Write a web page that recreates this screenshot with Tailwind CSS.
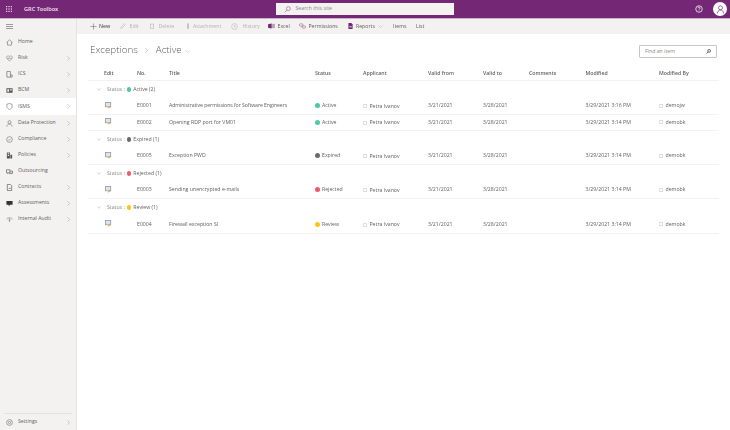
<!DOCTYPE html>
<html><head><meta charset="utf-8"><title>Exceptions</title>
<script src="https://cdn.jsdelivr.net/npm/@tailwindcss/browser@4"></script></head>
<body class="bg-white">
<div class="w-[730px] h-[430px] overflow-hidden flex flex-col font-['Open_Sans',sans-serif] text-[5.2px] text-[#605e5c] blur-[0.3px]">
  <header class="h-[19px] bg-[#742774] border-b border-[#c9b3c9] flex items-center text-white shrink-0">
    <div class="w-[18px] flex justify-center"><svg width="6" height="6" viewBox="0 0 6 6" fill="#e9d5e9"><rect width="1.2" height="1.2"/><rect x="2.4" width="1.2" height="1.2"/><rect x="4.8" width="1.2" height="1.2"/><rect y="2.4" width="1.2" height="1.2"/><rect x="2.4" y="2.4" width="1.2" height="1.2"/><rect x="4.8" y="2.4" width="1.2" height="1.2"/><rect y="4.8" width="1.2" height="1.2"/><rect x="2.4" y="4.8" width="1.2" height="1.2"/><rect x="4.8" y="4.8" width="1.2" height="1.2"/></svg></div>
    <span class="ml-[6px] w-[252px] font-semibold text-[5.600px] text-[#f1e7f1]">GRC Toolbox</span>
    <div class="w-[178px] h-[12px] bg-[#f3f2f1] flex items-center pl-[8px] gap-[4.500px] text-[#8a8886]"><svg width="7" height="7" viewBox="0 0 16 16" fill="none" stroke="#9a5f9a" stroke-width="1.5"><circle cx="10" cy="6" r="4.5"/><path d="M6.5 9.5 1.5 14.5"/></svg><span>Search this site</span></div>
    <div class="ml-auto flex items-center">
      <svg width="8" height="8" viewBox="0 0 16 16" fill="none" stroke="#fff" stroke-width="1.5"><circle cx="8" cy="8" r="6.5"/><path d="M6 6.2a2 2 0 1 1 3 1.7c-.7.4-1 .8-1 1.6M8 11v1.2"/></svg>
      <div class="ml-[10px] mr-[3px] w-[14px] h-[14px] rounded-full bg-white flex items-center justify-center"><svg width="9" height="9" viewBox="0 0 16 16" fill="none" stroke="#742774" stroke-width="1.2"><circle cx="8" cy="5" r="3.5"/><path d="M2.5 15c.3-4 2.5-6 5.5-6s5.200 2 5.500 6"/></svg></div>
    </div>
  </header>
  <div class="flex flex-1 min-h-0">
    <aside class="w-[77px] shrink-0 bg-[#f3f2f1] flex flex-col border-r border-[#e5e4e2]">
      <div class="h-[15px] flex items-center pl-[6px]"><svg width="7" height="5" viewBox="0 0 7 5" stroke="#777" stroke-width=".7"><path d="M0 .5h7M0 2.500h7M0 4.500h7"/></svg></div>
      <div class="flex flex-col">
        <div class="h-[16px] flex items-center pl-[6px] pr-[6px]"><svg class="w-[7px] h-[7px] mr-[5px]" viewBox="0 0 16 16" fill="none" stroke="#666" stroke-width="1.300"><path d="M1 8l7-6 7 6M3.500 7v7h9V7"/></svg><span>Home</span></div>
        <div class="h-[16px] flex items-center pl-[6px] pr-[6px]"><svg class="w-[7px] h-[7px] mr-[5px]" viewBox="0 0 16 16" fill="none" stroke="#777" stroke-width="1.300"><path d="M8 14 2 7.500C0 4 4-.5 8 4c4-4.500 8 0 6 3.500z"/><path d="M3 8h3l1.500-2 2 3 1-1h2"/></svg><span>Risk</span><svg class="ml-auto w-[3px] h-[5px]" viewBox="0 0 3 5" fill="none" stroke="#a19f9d" stroke-width=".5"><path d="M.4.3 2.600 2.500.4 4.700"/></svg></div>
        <div class="h-[16px] flex items-center pl-[6px] pr-[6px]"><svg class="w-[7px] h-[7px] mr-[5px]" viewBox="0 0 16 16" fill="none" stroke="#666" stroke-width="1.500"><path d="M2 1h8v13H2zM10 9h4v5h-4"/></svg><span>ICS</span><svg class="ml-auto w-[3px] h-[5px]" viewBox="0 0 3 5" fill="none" stroke="#a19f9d" stroke-width=".5"><path d="M.4.3 2.600 2.500.4 4.700"/></svg></div>
        <div class="h-[16px] flex items-center pl-[6px] pr-[6px]"><svg class="w-[7px] h-[7px] mr-[5px]" viewBox="0 0 16 16" fill="#555"><path d="M1 3h14v10H1zM3 5v6h4V5zM9 5v3h4V5z" fill-rule="evenodd"/></svg><span>BCM</span><svg class="ml-auto w-[3px] h-[5px]" viewBox="0 0 3 5" fill="none" stroke="#a19f9d" stroke-width=".5"><path d="M.4.3 2.600 2.500.4 4.700"/></svg></div>
        <div class="h-[17px] flex items-center pl-[6px] pr-[6px] bg-white"><svg class="w-[7px] h-[7px] mr-[5px]" viewBox="0 0 16 16" fill="none" stroke="#666" stroke-width="1.300"><path d="M8 1l6 2v5c0 3-3 5.500-6 7-3-1.500-6-4-6-7V3z"/></svg><span>ISMS</span><svg class="ml-auto w-[3px] h-[5px]" viewBox="0 0 3 5" fill="none" stroke="#a19f9d" stroke-width=".5"><path d="M.4.3 2.600 2.500.4 4.700"/></svg></div>
        <div class="h-[16px] flex items-center pl-[6px] pr-[6px]"><svg class="w-[7px] h-[7px] mr-[5px]" viewBox="0 0 16 16" fill="none" stroke="#666" stroke-width="1.300"><circle cx="8" cy="5" r="3.500"/><path d="M2 15c.3-4 3-6 6-6s5.700 2 6 6"/></svg><span>Data Protection</span><svg class="ml-auto w-[3px] h-[5px]" viewBox="0 0 3 5" fill="none" stroke="#a19f9d" stroke-width=".5"><path d="M.4.3 2.600 2.500.4 4.700"/></svg></div>
        <div class="h-[16px] flex items-center pl-[6px] pr-[6px]"><svg class="w-[7px] h-[7px] mr-[5px]" viewBox="0 0 16 16" fill="none" stroke="#666" stroke-width="1.300"><circle cx="8" cy="8" r="6.500"/><path d="M5 8l2 2 4-4"/></svg><span>Compliance</span><svg class="ml-auto w-[3px] h-[5px]" viewBox="0 0 3 5" fill="none" stroke="#a19f9d" stroke-width=".5"><path d="M.4.3 2.600 2.500.4 4.700"/></svg></div>
        <div class="h-[16px] flex items-center pl-[6px] pr-[6px]"><svg class="w-[7px] h-[7px] mr-[5px]" viewBox="0 0 16 16" fill="#555"><path d="M2 1h7v14H2zM10 6h4v9h-4zM4 3v2h3V3zM4 7v2h3V7z" fill-rule="evenodd"/></svg><span>Policies</span><svg class="ml-auto w-[3px] h-[5px]" viewBox="0 0 3 5" fill="none" stroke="#a19f9d" stroke-width=".5"><path d="M.4.3 2.600 2.500.4 4.700"/></svg></div>
        <div class="h-[16px] flex items-center pl-[6px] pr-[6px]"><svg class="w-[7px] h-[7px] mr-[5px]" viewBox="0 0 16 16" fill="none" stroke="#555" stroke-width="1.500"><path d="M1 4h8v7H1zM9 7h6v5H7M3 13h2M11 13h2"/></svg><span>Outsourcing</span></div>
        <div class="h-[16px] flex items-center pl-[6px] pr-[6px]"><svg class="w-[7px] h-[7px] mr-[5px]" viewBox="0 0 16 16" fill="none" stroke="#555" stroke-width="1.500"><path d="M3 1h7l3 3v11H3zM6 10h5"/></svg><span>Contracts</span><svg class="ml-auto w-[3px] h-[5px]" viewBox="0 0 3 5" fill="none" stroke="#a19f9d" stroke-width=".5"><path d="M.4.3 2.600 2.500.4 4.700"/></svg></div>
        <div class="h-[16px] flex items-center pl-[6px] pr-[6px]"><svg class="w-[7px] h-[7px] mr-[5px]" viewBox="0 0 16 16" fill="#333"><path d="M1 2h14v9H8v4l-3-4H1z"/></svg><span>Assessments</span><svg class="ml-auto w-[3px] h-[5px]" viewBox="0 0 3 5" fill="none" stroke="#a19f9d" stroke-width=".5"><path d="M.4.3 2.600 2.500.4 4.700"/></svg></div>
        <div class="h-[16px] flex items-center pl-[6px] pr-[6px]"><svg class="w-[7px] h-[7px] mr-[5px]" viewBox="0 0 16 16" fill="none" stroke="#777" stroke-width="1.300"><path d="M1 7c3-4 11-4 14 0M8 5v9M5 8l3 3 3-3"/></svg><span>Internal Audit</span><svg class="ml-auto w-[3px] h-[5px]" viewBox="0 0 3 5" fill="none" stroke="#a19f9d" stroke-width=".5"><path d="M.4.3 2.600 2.500.4 4.700"/></svg></div>
      </div>
      <div class="mt-auto mx-[4px] border-t border-[#e3e2e0] h-[17px] flex items-center pl-[2px] pr-[2px]"><svg class="w-[7px] h-[7px] mr-[5px]" viewBox="0 0 16 16" fill="none" stroke="#777" stroke-width="1.500"><circle cx="8" cy="8" r="6.500"/><circle cx="8" cy="8" r="2.500"/></svg><span>Settings</span><svg class="ml-auto w-[3px] h-[5px]" viewBox="0 0 3 5" fill="none" stroke="#a19f9d" stroke-width=".5"><path d="M.4.3 2.600 2.500.4 4.700"/></svg></div>
    </aside>
    <main class="flex-1 min-w-0 flex flex-col">
      <div class="h-[15px] bg-[#f3f2f1] flex items-center pl-[12.500px] shrink-0 text-[#605e5c]">
        <div class="flex items-center gap-[2.500px] w-[30.500px] font-semibold"><svg class="w-[7px] h-[7px]" viewBox="0 0 8 8" stroke="#666" stroke-width=".6"><path d="M4 .5v7M.5 4h7"/></svg><span>New</span></div>
        <div class="flex items-center gap-[3.500px] w-[29px] text-[#b5b3b1]"><svg class="w-[6px] h-[6px]" viewBox="0 0 8 8" fill="none" stroke="#b5b3b1" stroke-width=".7"><path d="M1 7l1-2.500L6 .8 7.200 2 3.500 6z"/></svg><span>Edit</span></div>
        <div class="flex items-center gap-[3.500px] w-[36px] text-[#b5b3b1]"><svg class="w-[6px] h-[6px]" viewBox="0 0 8 8" fill="none" stroke="#b5b3b1" stroke-width=".8"><path d="M1.500 1.500h5M2 1.500V7.500h4V1.500"/></svg><span>Delete</span></div>
        <div class="flex items-center gap-[2px] w-[46px] text-[#b5b3b1]"><svg class="w-[6px] h-[6px]" viewBox="0 0 8 8" fill="#b5b3b1"><path d="M3 .5h2v7H3z"/></svg><span>Attachment</span></div>
        <div class="flex items-center gap-[4.500px] w-[37px] text-[#b5b3b1]"><svg class="w-[7px] h-[7px]" viewBox="0 0 8 8" fill="none" stroke="#b5b3b1" stroke-width=".6"><circle cx="4" cy="4" r="3.300"/><path d="M4 2v2.200h1.700"/></svg><span>History</span></div>
        <div class="flex items-center gap-[2.500px] w-[31px]"><svg class="w-[7px] h-[6px]" viewBox="0 0 8 7" fill="#742774"><path d="M2 1h6v5H2z" fill="#bda2bd"/><path d="M0 1.500l4-1v6l-4-1z"/></svg><span>Excel</span></div>
        <div class="flex items-center gap-[2.500px] w-[48.500px]"><svg class="w-[7px] h-[6px]" viewBox="0 0 8 7" fill="none" stroke="#8a4b8a" stroke-width=".6"><rect x=".5" y="1" width="4" height="2.600" rx="1"/><rect x="3.500" y="3.400" width="4" height="2.600" rx="1"/></svg><span>Permissions</span></div>
        <div class="flex items-center gap-[3.500px] w-[45.500px]"><svg class="w-[5px] h-[6px]" viewBox="0 0 6 7" fill="#742774"><path d="M.5 0H4l1.500 1.500V7h-5z"/><path d="M1.500 4h3v1h-3z" fill="#fff"/></svg><span>Reports</span><svg class="w-[5px] h-[3px]" viewBox="0 0 5 3" fill="none" stroke="#a19f9d" stroke-width=".4"><path d="M.4.4 2.500 2.400 4.600.4"/></svg></div>
        <span class="w-[23px]">Items</span><span>List</span>
      </div>
      <div class="flex items-center h-[33px] pl-[13px] pr-[13px] shrink-0">
        <h1 class="text-[9.800px] text-[#605e5c] font-light flex items-center"><span>Exceptions</span><svg class="ml-[7px] mr-[8px] w-[3px] h-[5px]" viewBox="0 0 3 5" fill="none" stroke="#8a8886" stroke-width=".5"><path d="M.4.3 2.600 2.500.4 4.700"/></svg><span>Active</span><svg class="ml-[3px] mt-[2px] w-[5px] h-[3px]" viewBox="0 0 5 3" fill="none" stroke="#a19f9d" stroke-width=".4"><path d="M.4.4 2.500 2.400 4.600.4"/></svg></h1>
        <div class="ml-auto w-[78px] h-[13px] mt-[2px] bg-white border border-[#c8c6c4] rounded-[1px] flex items-center justify-between px-[5px] text-[#8a8886]"><span>Find an item</span><svg class="w-[5px] h-[5px]" viewBox="0 0 16 16" fill="none" stroke="#444" stroke-width="2.500"><circle cx="10" cy="6" r="4.500"/><path d="M6.500 9.500 1.500 14.500"/></svg></div>
      </div>
      <div class="ml-[11px] w-[631px]">
        <div class="grid grid-cols-[16px_33px_32px_146px_48px_65px_55px_46px_56.500px_73.500px_1fr] h-[14px] items-center border-b border-[#f3f2f1] font-semibold">
          <span></span><span>Edit</span><span>No.</span><span>Title</span><span>Status</span><span>Applicant</span><span>Valid from</span><span>Valid to</span><span>Comments</span><span>Modified</span><span>Modified By</span>
        </div>
        <div class="flex items-center h-[17px] pl-[9px] gap-[3px]"><svg class="w-[4px] h-[3px]" viewBox="0 0 5 3" fill="none" stroke="#8a8886" stroke-width=".5"><path d="M.4.4 2.500 2.400 4.600.4"/></svg><span class="text-[#8a8886] ml-[3px]">Status :</span><span class="w-[4.500px] h-[4.500px] rounded-full bg-[#4cc8a4] -ml-[1px]"></span><span class="-ml-[1px]">Active (2)</span></div>
        <div class="grid grid-cols-[16px_33px_32px_146px_48px_65px_55px_46px_56.500px_73.500px_1fr] h-[17px] items-center border-b border-[#f3f2f1]"><span></span><svg class="w-[7px] h-[7px] ml-px -mt-[2px]" viewBox="0 0 8 8"><path d="M0 0h7v6H0z" fill="#9aa3b5"/><path d="M1 1h5v4H1z" fill="#dfe3ea"/><path d="M3 7l3-3 1 1-3 2.500z" fill="#d9a441"/></svg><span>E0001</span><span class="tracking-[-0.08px]">Administrative permissions for Software Engineers</span><span class="flex items-center gap-[2px]"><i class="w-[5px] h-[5px] rounded-full bg-[#4cc8a4]"></i>Active</span><span class="flex items-center gap-[2.500px] mt-px"><i class="w-[4px] h-[4px] border-[0.5px] border-[#e1dfdd]"></i>Petra Ivanov</span><span>3/21/2021</span><span>3/28/2021</span><span></span><span>3/29/2021 3:16 PM</span><span class="flex items-center gap-[2.500px]"><i class="w-[4px] h-[4px] border-[0.5px] border-[#e1dfdd]"></i>demojw</span></div>
        <div class="grid grid-cols-[16px_33px_32px_146px_48px_65px_55px_46px_56.500px_73.500px_1fr] h-[16px] items-center border-b border-[#f3f2f1]"><span></span><svg class="w-[7px] h-[7px] ml-px -mt-[2px]" viewBox="0 0 8 8"><path d="M0 0h7v6H0z" fill="#9aa3b5"/><path d="M1 1h5v4H1z" fill="#dfe3ea"/><path d="M3 7l3-3 1 1-3 2.500z" fill="#d9a441"/></svg><span>E0002</span><span>Opening RDP port for VM01</span><span class="flex items-center gap-[2px]"><i class="w-[5px] h-[5px] rounded-full bg-[#4cc8a4]"></i>Active</span><span class="flex items-center gap-[2.500px] mt-px"><i class="w-[4px] h-[4px] border-[0.5px] border-[#e1dfdd]"></i>Petra Ivanov</span><span>3/21/2021</span><span>3/28/2021</span><span></span><span>3/29/2021 3:14 PM</span><span class="flex items-center gap-[2.500px]"><i class="w-[4px] h-[4px] border-[0.5px] border-[#e1dfdd]"></i>demobk</span></div>
        <div class="flex items-center h-[17px] pl-[9px] gap-[3px]"><svg class="w-[4px] h-[3px]" viewBox="0 0 5 3" fill="none" stroke="#8a8886" stroke-width=".5"><path d="M.4.4 2.500 2.400 4.600.4"/></svg><span class="text-[#8a8886] ml-[3px]">Status :</span><span class="w-[4.500px] h-[4.500px] rounded-full bg-[#6b6a69] -ml-[1px]"></span><span class="-ml-[1px]">Expired (1)</span></div>
        <div class="grid grid-cols-[16px_33px_32px_146px_48px_65px_55px_46px_56.500px_73.500px_1fr] h-[17px] items-center border-b border-[#f3f2f1]"><span></span><svg class="w-[7px] h-[7px] ml-px -mt-[2px]" viewBox="0 0 8 8"><path d="M0 0h7v6H0z" fill="#9aa3b5"/><path d="M1 1h5v4H1z" fill="#dfe3ea"/><path d="M3 7l3-3 1 1-3 2.500z" fill="#d9a441"/></svg><span>E0005</span><span>Exception PWD</span><span class="flex items-center gap-[2px]"><i class="w-[5px] h-[5px] rounded-full bg-[#6b6a69]"></i>Expired</span><span class="flex items-center gap-[2.500px] mt-px"><i class="w-[4px] h-[4px] border-[0.5px] border-[#e1dfdd]"></i>Petra Ivanov</span><span>3/21/2021</span><span>3/28/2021</span><span></span><span>3/29/2021 3:14 PM</span><span class="flex items-center gap-[2.500px]"><i class="w-[4px] h-[4px] border-[0.5px] border-[#e1dfdd]"></i>demobk</span></div>
        <div class="flex items-center h-[17px] pl-[9px] gap-[3px]"><svg class="w-[4px] h-[3px]" viewBox="0 0 5 3" fill="none" stroke="#8a8886" stroke-width=".5"><path d="M.4.4 2.500 2.400 4.600.4"/></svg><span class="text-[#8a8886] ml-[3px]">Status :</span><span class="w-[4.500px] h-[4.500px] rounded-full bg-[#f0596b] -ml-[1px]"></span><span class="-ml-[1px]">Rejected (1)</span></div>
        <div class="grid grid-cols-[16px_33px_32px_146px_48px_65px_55px_46px_56.500px_73.500px_1fr] h-[17px] items-center border-b border-[#f3f2f1]"><span></span><svg class="w-[7px] h-[7px] ml-px -mt-[2px]" viewBox="0 0 8 8"><path d="M0 0h7v6H0z" fill="#9aa3b5"/><path d="M1 1h5v4H1z" fill="#dfe3ea"/><path d="M3 7l3-3 1 1-3 2.500z" fill="#d9a441"/></svg><span>E0003</span><span>Sending unencrypted e-mails</span><span class="flex items-center gap-[2px]"><i class="w-[5px] h-[5px] rounded-full bg-[#f0596b]"></i>Rejected</span><span class="flex items-center gap-[2.500px] mt-px"><i class="w-[4px] h-[4px] border-[0.5px] border-[#e1dfdd]"></i>Petra Ivanov</span><span>3/21/2021</span><span>3/28/2021</span><span></span><span>3/29/2021 3:14 PM</span><span class="flex items-center gap-[2.500px]"><i class="w-[4px] h-[4px] border-[0.5px] border-[#e1dfdd]"></i>demobk</span></div>
        <div class="flex items-center h-[17px] pl-[9px] gap-[3px]"><svg class="w-[4px] h-[3px]" viewBox="0 0 5 3" fill="none" stroke="#8a8886" stroke-width=".5"><path d="M.4.4 2.500 2.400 4.600.4"/></svg><span class="text-[#8a8886] ml-[3px]">Status :</span><span class="w-[4.500px] h-[4.500px] rounded-full bg-[#fdc612] -ml-[1px]"></span><span class="-ml-[1px]">Review (1)</span></div>
        <div class="grid grid-cols-[16px_33px_32px_146px_48px_65px_55px_46px_56.500px_73.500px_1fr] h-[18px] items-center border-b border-[#f3f2f1]"><span></span><svg class="w-[7px] h-[7px] ml-px -mt-[2px]" viewBox="0 0 8 8"><path d="M0 0h7v6H0z" fill="#9aa3b5"/><path d="M1 1h5v4H1z" fill="#dfe3ea"/><path d="M3 7l3-3 1 1-3 2.500z" fill="#d9a441"/></svg><span>E0004</span><span>Firewall exception SI</span><span class="flex items-center gap-[2px]"><i class="w-[5px] h-[5px] rounded-full bg-[#fdc612]"></i>Review</span><span class="flex items-center gap-[2.500px] mt-px"><i class="w-[4px] h-[4px] border-[0.5px] border-[#e1dfdd]"></i>Petra Ivanov</span><span>3/21/2021</span><span>3/28/2021</span><span></span><span>3/29/2021 3:14 PM</span><span class="flex items-center gap-[2.500px]"><i class="w-[4px] h-[4px] border-[0.5px] border-[#e1dfdd]"></i>demobk</span></div>
      </div>
    </main>
  </div>
</div>
</body></html>
